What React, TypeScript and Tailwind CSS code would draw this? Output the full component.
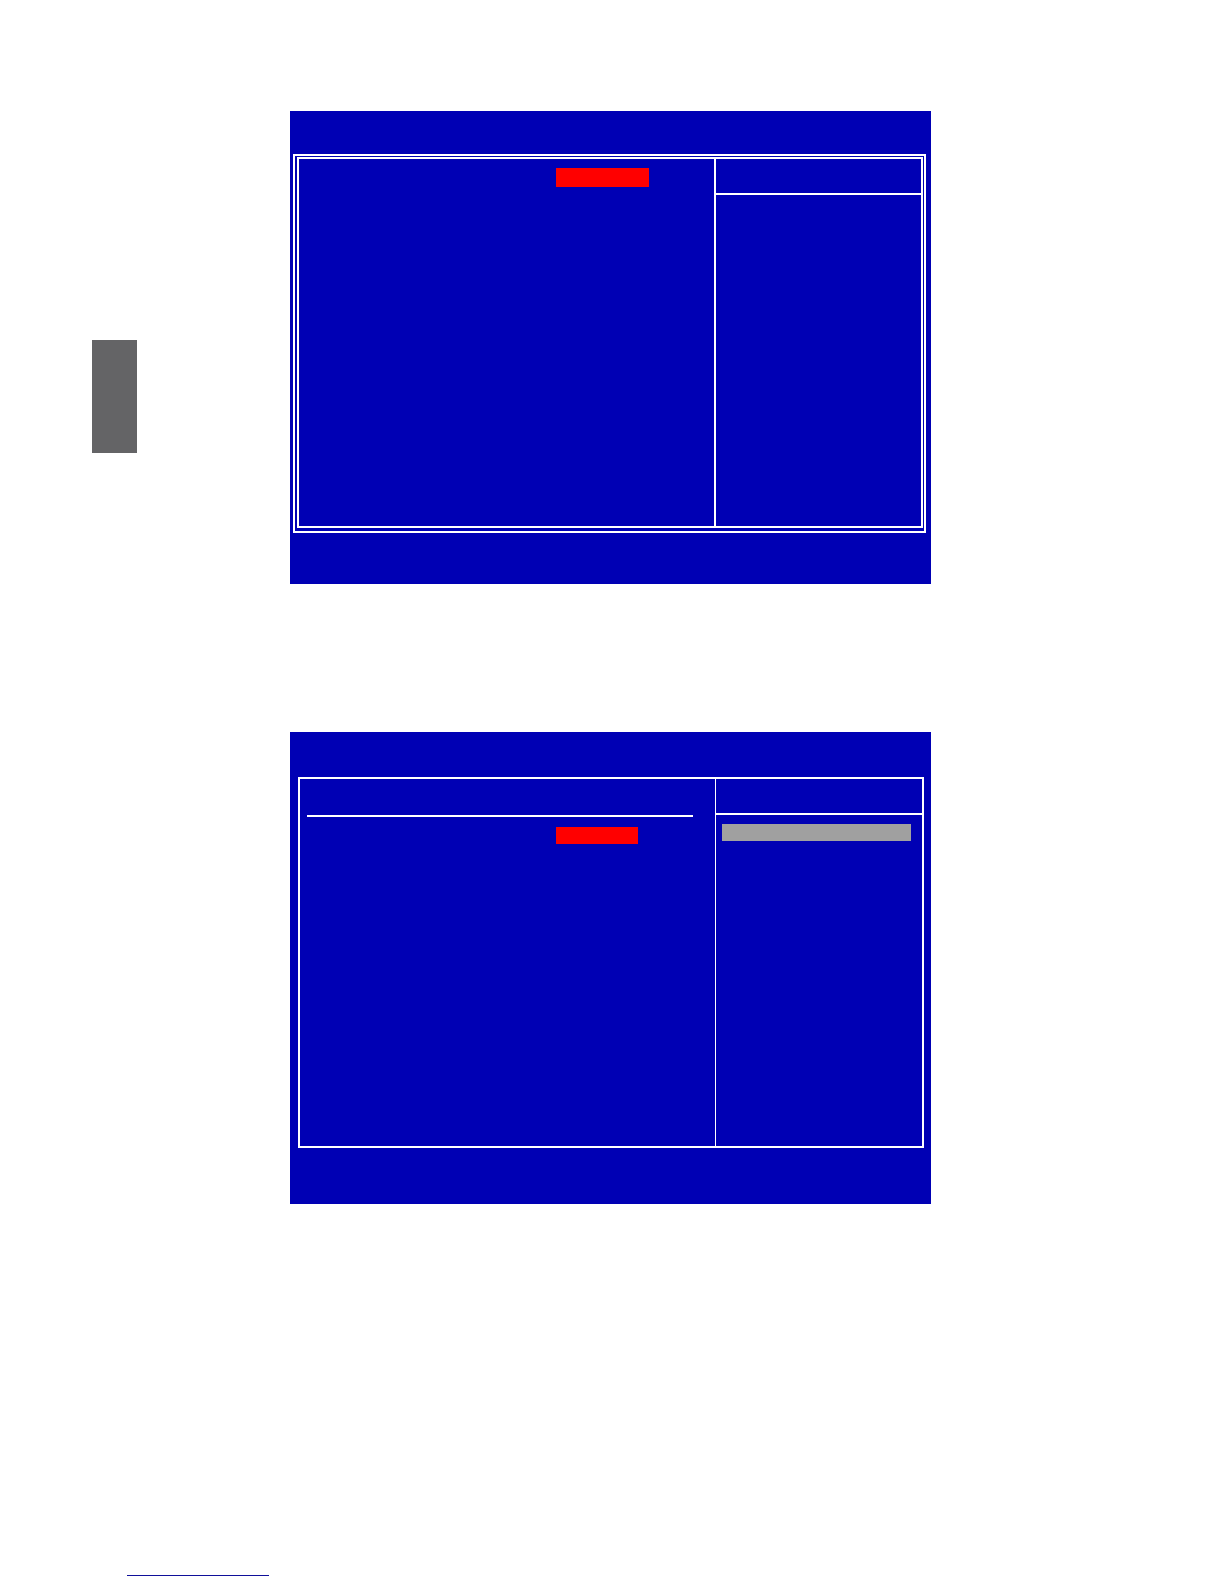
import React from "react";

function HelpColumn({
  divider,
  children,
}: {
  divider: string;
  children?: React.ReactNode;
}) {
  return (
    <aside className={`w-[207px] shrink-0 border-white ${divider}`}>
      <div className="h-9 border-b-2 border-white" />
      {children}
    </aside>
  );
}

// Setup screen with a double frame
function MainScreen() {
  return (
    <section className="bg-[#0000b4] pt-[43px] pr-[5px] pb-[51px] pl-[3px]">
      <div className="border-2 border-white pt-px pr-px pb-[3px] pl-[2px]">
        <div className="flex min-h-[371px] border-2 border-white">
          <div className="flex-1 pt-[9px] pl-[257px]">
            <div className="h-[19px] w-[93px] bg-[#ff0000]" />
          </div>
          <HelpColumn divider="border-l-2" />
        </div>
      </div>
    </section>
  );
}

// Sub menu screen with a single frame and a title rule
function SubScreen() {
  return (
    <section className="bg-[#0000b4] pt-[45px] pr-[7px] pb-[56px] pl-2">
      <div className="flex min-h-[371px] border-2 border-white">
        <div className="flex-1">
          <div className="mr-[22px] ml-[7px] h-[38px] border-b-2 border-white" />
          <div className="mt-[10px] ml-[256px] h-[17px] w-[82px] bg-[#ff0000]" />
        </div>
        <HelpColumn divider="border-l">
          <div className="mt-[9px] mr-[11px] ml-[6px] h-[17px] bg-[#a0a0a0]" />
        </HelpColumn>
      </div>
    </section>
  );
}

export default function App() {
  return (
    <div className="flex min-h-screen flex-col bg-white">
      <div className="flex pt-[111px] pr-[293px]">
        <div className="w-[290px] shrink-0 pt-[229px] pl-[92px]">
          <div className="h-[113px] w-[45px] bg-[#646466]" />
        </div>
        <main className="flex flex-1 flex-col gap-[148px]">
          <MainScreen />
          <SubScreen />
        </main>
      </div>
      <footer className="mt-auto pb-2 pl-[127px]">
        <div className="h-px w-[142px] bg-[#10109a]" />
      </footer>
    </div>
  );
}
